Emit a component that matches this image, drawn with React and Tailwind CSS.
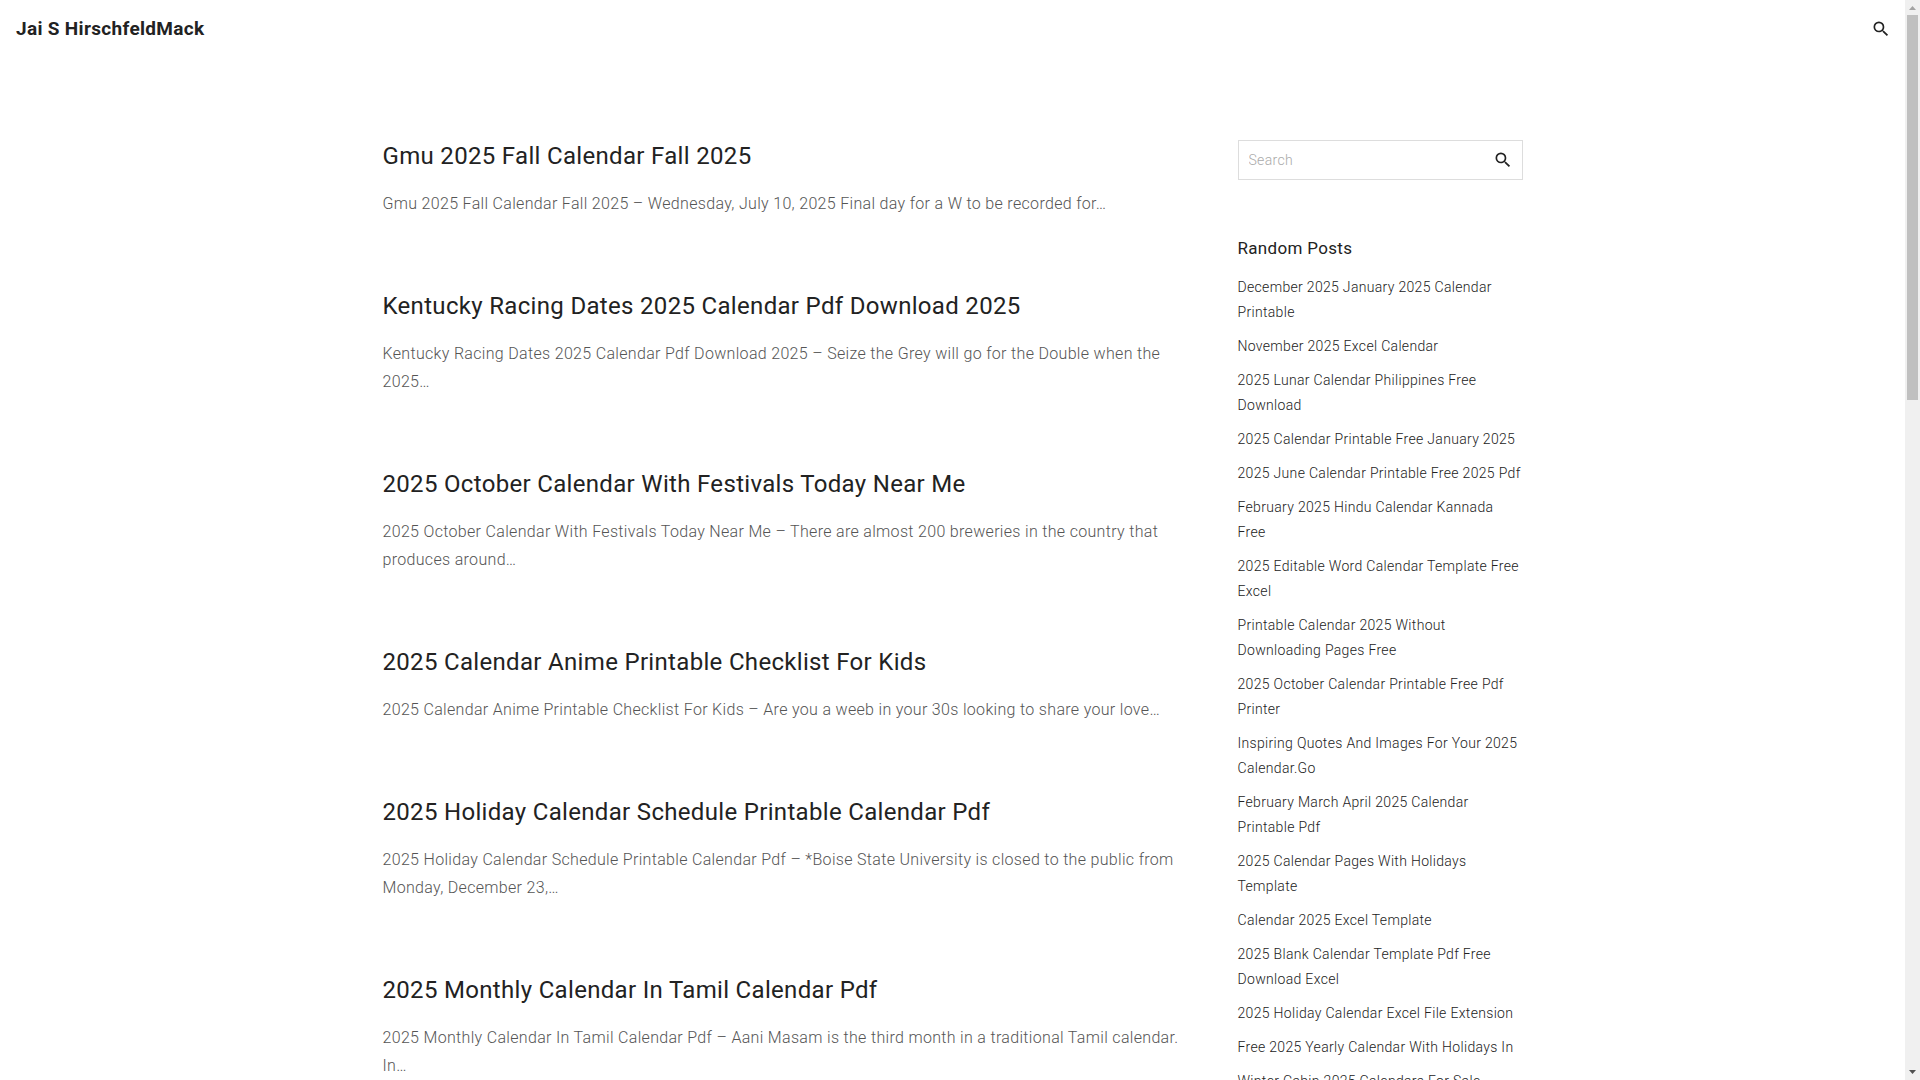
import { useState } from "react";

const posts = [
    { title: "Gmu 2025 Fall Calendar Fall 2025", excerpt: "Gmu 2025 Fall Calendar Fall 2025 – Wednesday, July 10, 2025 Final day for a W to be recorded for…" },
    { title: "Kentucky Racing Dates 2025 Calendar Pdf Download 2025", excerpt: "Kentucky Racing Dates 2025 Calendar Pdf Download 2025 – Seize the Grey will go for the Double when the 2025…" },
    { title: "2025 October Calendar With Festivals Today Near Me", excerpt: "2025 October Calendar With Festivals Today Near Me – There are almost 200 breweries in the country that produces around…" },
    { title: "2025 Calendar Anime Printable Checklist For Kids", excerpt: "2025 Calendar Anime Printable Checklist For Kids – Are you a weeb in your 30s looking to share your love…" },
    { title: "2025 Holiday Calendar Schedule Printable Calendar Pdf", excerpt: "2025 Holiday Calendar Schedule Printable Calendar Pdf – *Boise State University is closed to the public from Monday, December 23,…" },
    { title: "2025 Monthly Calendar In Tamil Calendar Pdf", excerpt: "2025 Monthly Calendar In Tamil Calendar Pdf – Aani Masam is the third month in a traditional Tamil calendar. In…" },
];

const randomPosts = [
    "December 2025 January 2025 Calendar Printable",
    "November 2025 Excel Calendar",
    "2025 Lunar Calendar Philippines Free Download",
    "2025 Calendar Printable Free January 2025",
    "2025 June Calendar Printable Free 2025 Pdf",
    "February 2025 Hindu Calendar Kannada Free",
    "2025 Editable Word Calendar Template Free Excel",
    "Printable Calendar 2025 Without Downloading Pages Free",
    "2025 October Calendar Printable Free Pdf Printer",
    "Inspiring Quotes And Images For Your 2025 Calendar.Go",
    "February March April 2025 Calendar Printable Pdf",
    "2025 Calendar Pages With Holidays Template",
    "Calendar 2025 Excel Template",
    "2025 Blank Calendar Template Pdf Free Download Excel",
    "2025 Holiday Calendar Excel File Extension",
    "Free 2025 Yearly Calendar With Holidays In",
    "Winter Cabin 2025 Calendars For Sale",
];

const SearchIcon = () => (
    <svg viewBox="0 0 24 24" className="w-5 h-5" fill="currentColor" aria-hidden="true">
        <path d="M15.5 14h-.79l-.28-.27A6.47 6.47 0 0 0 16 9.5 6.5 6.5 0 1 0 9.5 16c1.61 0 3.09-.59 4.23-1.57l.27.28v.79l5 4.99L20.49 19l-4.99-5zm-6 0C7.01 14 5 11.99 5 9.5S7.01 5 9.5 5 14 7.01 14 9.5 11.99 14 9.5 14z" />
    </svg>
);

const Scrollbar = () => (
    <div className="w-[15px] shrink-0 bg-[#f0f0f0] flex flex-col items-center" aria-hidden="true">
        <svg viewBox="0 0 15 15" className="w-[15px] h-[15px]"><path d="M4 10 7.5 6 11 10z" fill="#a3a3a3" /></svg>
        <div className="w-[11px] h-[calc(37%-15px)] bg-[#c0c0c0]"></div>
        <svg viewBox="0 0 15 15" className="w-[15px] h-[15px] mt-auto"><path d="M4 5 7.5 9 11 5z" fill="#505050" /></svg>
    </div>
);

const App = () => {
    const [query, setQuery] = useState("");

    return (
        <div className="flex h-screen overflow-hidden bg-white text-[#222] font-['Roboto',sans-serif] tracking-[0.02em]">
            <div className="flex-1 min-w-0 overflow-hidden">
                <header className="flex items-center justify-between h-[58px] pl-4 pr-[14px]">
                    <a href="#" className="text-[19px] leading-[30px] font-bold">Jai S HirschfeldMack</a>
                    <button type="button" aria-label="Open search">
                        <SearchIcon />
                    </button>
                </header>

                <div className="max-w-[1140px] mx-auto pt-[82px] flex justify-between">
                    <main className="w-[800px]">
                        {posts.map((post) => (
                            <article key={post.title} className="mb-[72px]">
                                <h2 className="text-[24px] leading-[32px] mb-[18px]">
                                    <a href="#">{post.title}</a>
                                </h2>
                                <p className="text-[16px] leading-[28px] font-light text-[#555]">{post.excerpt}</p>
                            </article>
                        ))}
                    </main>

                    <aside className="w-[285px]">
                        <form className="flex items-center h-10 border border-[#ddd] mb-[56px]" onSubmit={(e) => e.preventDefault()}>
                            <input
                                type="search"
                                aria-label="Search"
                                placeholder="Search"
                                value={query}
                                onChange={(e) => setQuery(e.target.value)}
                                className="flex-1 min-w-0 px-[10px] text-[14px] font-light outline-none placeholder:text-[#aaa]"
                            />
                            <button type="submit" aria-label="Submit search" className="px-[9px]">
                                <SearchIcon />
                            </button>
                        </form>
                        <h3 className="text-[17px] leading-[24px] mb-[15px]">Random Posts</h3>
                        <ul>
                            {randomPosts.map((title) => (
                                <li key={title} className="text-[14px] leading-[25px] mb-[9px] font-light">
                                    <a href="#">{title}</a>
                                </li>
                            ))}
                        </ul>
                    </aside>
                </div>
            </div>
            <Scrollbar />
        </div>
    );
};

export default App;
